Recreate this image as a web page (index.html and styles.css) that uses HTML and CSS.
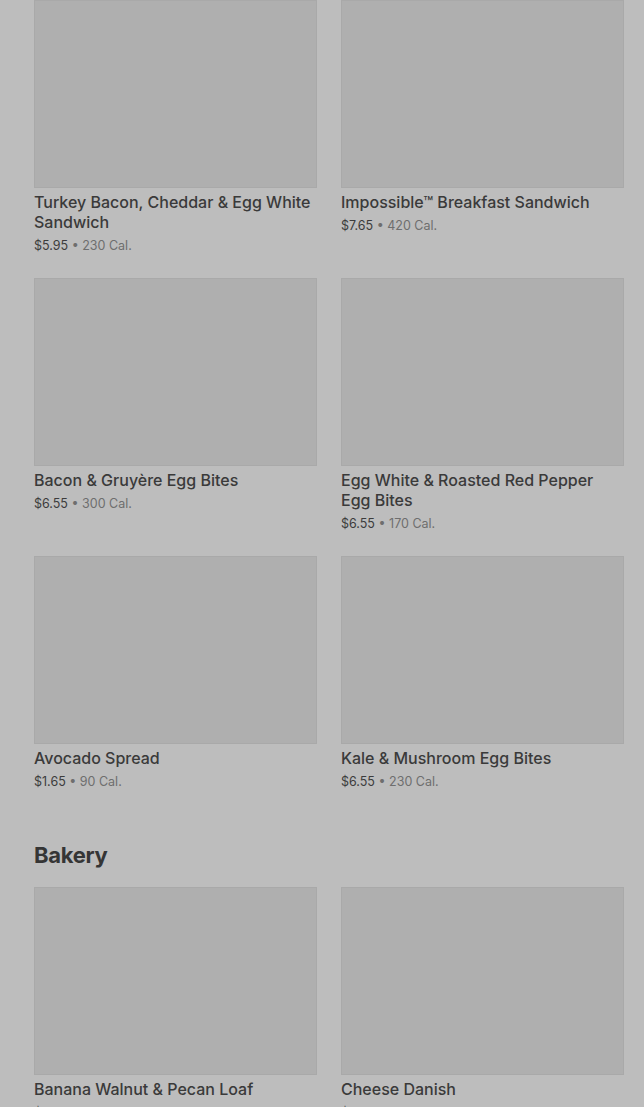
FILE: index.html
```html
<!DOCTYPE html>
<html>
<head>
  <title>Menu</title>
  <link rel="stylesheet" href="styles.css">
</head>
<body>

<div class="menu">
  <div class="section">
    <div class="grid">
      <div class="item">
        <div class="thumb"></div>
        <div class="name">Turkey Bacon, Cheddar &amp; Egg White Sandwich</div>
        <div class="meta"><span class="price">$5.95</span> • 230 Cal.</div>
      </div>
      <div class="item">
        <div class="thumb"></div>
        <div class="name">Impossible™ Breakfast Sandwich</div>
        <div class="meta"><span class="price">$7.65</span> • 420 Cal.</div>
      </div>
      <div class="item">
        <div class="thumb"></div>
        <div class="name">Bacon &amp; Gruyère Egg Bites</div>
        <div class="meta"><span class="price">$6.55</span> • 300 Cal.</div>
      </div>
      <div class="item">
        <div class="thumb"></div>
        <div class="name">Egg White &amp; Roasted Red Pepper Egg Bites</div>
        <div class="meta"><span class="price">$6.55</span> • 170 Cal.</div>
      </div>
      <div class="item">
        <div class="thumb"></div>
        <div class="name">Avocado Spread</div>
        <div class="meta"><span class="price">$1.65</span> • 90 Cal.</div>
      </div>
      <div class="item">
        <div class="thumb"></div>
        <div class="name">Kale &amp; Mushroom Egg Bites</div>
        <div class="meta"><span class="price">$6.55</span> • 230 Cal.</div>
      </div>
    </div>
  </div>

  <div class="section">
    <h2>Bakery</h2>
    <div class="grid">
      <div class="item">
        <div class="thumb"></div>
        <div class="name">Banana Walnut &amp; Pecan Loaf</div>
        <div class="meta"><span class="price">$4.55</span> • 420 Cal.</div>
      </div>
      <div class="item">
        <div class="thumb"></div>
        <div class="name">Cheese Danish</div>
        <div class="meta"><span class="price">$4.25</span> • 290 Cal.</div>
      </div>
    </div>
  </div>
</div>

</body>
</html>
```

FILE: styles.css
```css
body {
  margin: 0;
  background: #bdbdbd;
  font-family: Inter, "Noto Sans", sans-serif;
  color: #3a3a3a;
  overflow: hidden;
}
.menu {
  padding: 0 20px 0 34px;
}
.grid {
  display: grid;
  grid-template-columns: 283px 283px;
  column-gap: 24px;
  row-gap: 23px;
}
.thumb {
  height: 186px;
  background: #afafaf;
  border: 1px solid #a9a9a9;
}
.name {
  margin-top: 4px;
  font-size: 16px;
  font-weight: 500;
  line-height: 20px;
  color: #3a3a3a;
}
.meta {
  margin-top: 5px;
  font-size: 12.5px;
  line-height: 18px;
  color: #6e6e6e;
}
.price {
  color: #3c3c3c;
}
h2 {
  margin: 48px 0 16px 0;
  font-size: 22px;
  font-weight: 700;
  line-height: 32px;
  color: #353535;
  letter-spacing: -0.3px;
}
```
